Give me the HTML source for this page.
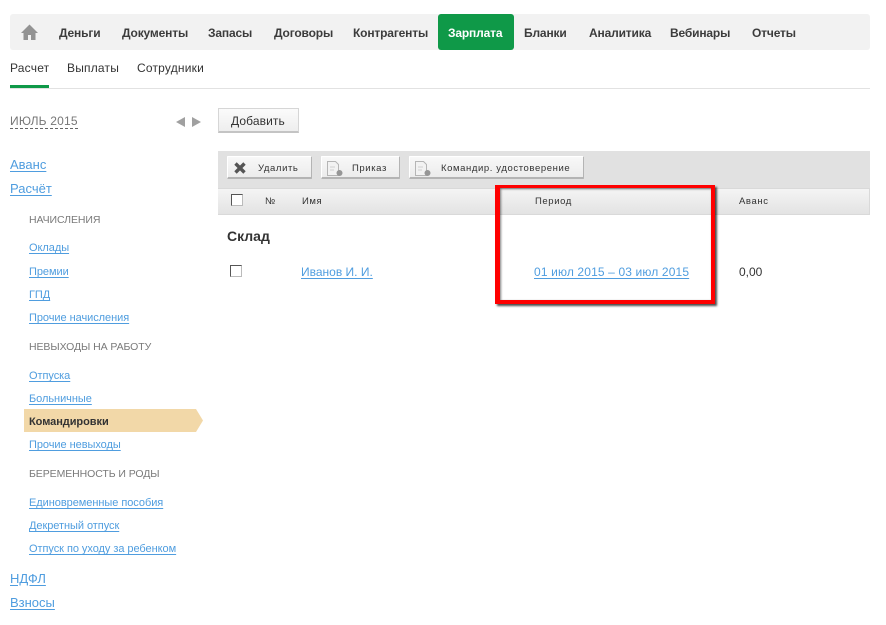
<!DOCTYPE html>
<html lang="ru"><head><meta charset="utf-8"><title>Зарплата</title>
<style>
html,body{margin:0;padding:0;background:#fff}
body{width:886px;height:625px;position:relative;overflow:hidden;font-family:"Liberation Sans",Arial,sans-serif;color:#333}
.a,.t{position:absolute;white-space:nowrap}
.t{line-height:16px;height:16px}
.nav{font-size:12px;font-weight:bold;color:#3c3c3c;top:25px;letter-spacing:-.16px}
.sub{font-size:12px;color:#333;top:60px;letter-spacing:.2px}
a{color:#4f9ddf;text-decoration:underline;text-underline-offset:2px}
.s{font-size:11px;letter-spacing:-.05px}
.b{font-size:13px}
.h{font-size:10.5px;color:#7a7a7a;letter-spacing:-.08px}
.btn{position:absolute;box-sizing:border-box;top:156px;height:23px;background:linear-gradient(#f8f8f8,#ececec);border:1px solid #fff;border-right:1px solid #b4b4b4;border-bottom:2px solid #b4b4b4;border-radius:1px}
.tb{font-size:9.5px;letter-spacing:.6px;color:#333}
.cb{position:absolute;box-sizing:border-box;background:#fff;border:1px solid #555;border-right-color:#bbb;border-bottom-color:#bbb}
</style></head><body>
<div class="a" style="left:10px;top:14px;width:860px;height:36px;background:#f2f2f2;border-radius:3px"></div>
<svg class="a" style="left:20px;top:23px" width="19" height="18" viewBox="0 0 19 18"><path d="M9.500 1.500 1 10h2.500v7H8v-5h3v5h4.500v-7H18z" fill="#939393"/></svg>
<span class="t nav" style="left:59px">Деньги</span>
<span class="t nav" style="left:122px">Документы</span>
<span class="t nav" style="left:208px">Запасы</span>
<span class="t nav" style="left:274px">Договоры</span>
<span class="t nav" style="left:353px">Контрагенты</span>
<div class="a" style="left:438px;top:14px;width:76px;height:36px;background:#0f9948;border-radius:3px"></div>
<span class="t nav" style="left:448px;color:#fff">Зарплата</span>
<span class="t nav" style="left:524px">Бланки</span>
<span class="t nav" style="left:589px">Аналитика</span>
<span class="t nav" style="left:670px">Вебинары</span>
<span class="t nav" style="left:752px">Отчеты</span>

<span class="t sub" style="left:10px">Расчет</span>
<span class="t sub" style="left:67px">Выплаты</span>
<span class="t sub" style="left:137px">Сотрудники</span>
<div class="a" style="left:10px;top:88px;width:860px;height:1px;background:#e2e2e2"></div>
<div class="a" style="left:10px;top:85px;width:39px;height:3px;background:#0f9948"></div>

<span class="t" style="left:10px;top:113px;font-size:12px;color:#777;border-bottom:1px dashed #666;height:15px;letter-spacing:.2px">ИЮЛЬ 2015</span>
<svg class="a" style="left:175px;top:116px" width="27" height="12"><path d="M10 1v10L1 6z" fill="#a0a0a0"/><path d="M17 1v10l9-5z" fill="#a0a0a0"/></svg>
<div class="a" style="left:218px;top:108px;width:81px;height:25px;box-sizing:border-box;background:linear-gradient(#fbfbfb,#eee);border:1px solid #d6d6d6;border-bottom:2px solid #c4c4c4"></div>
<span class="t" style="left:231px;top:113px;font-size:12px;color:#333;letter-spacing:.1px">Добавить</span>

<span class="t b" style="left:10px;top:157px"><a>Аванс</a></span>
<span class="t b" style="left:10px;top:181px"><a>Расчёт</a></span>
<span class="t h" style="left:29px;top:212px">НАЧИСЛЕНИЯ</span>
<span class="t s" style="left:29px;top:240px"><a>Оклады</a></span>
<span class="t s" style="left:29px;top:264px"><a>Премии</a></span>
<span class="t s" style="left:29px;top:287px"><a>ГПД</a></span>
<span class="t s" style="left:29px;top:310px"><a>Прочие начисления</a></span>
<span class="t h" style="left:29px;top:339px">НЕВЫХОДЫ НА РАБОТУ</span>
<span class="t s" style="left:29px;top:368px"><a>Отпуска</a></span>
<span class="t s" style="left:29px;top:391px"><a>Больничные</a></span>
<svg class="a" style="left:24px;top:409px" width="180" height="23"><path d="M0 0H172L179 11.500 172 23H0z" fill="#f2d8a8"/></svg>
<span class="t s" style="left:29px;top:414px;font-weight:bold;color:#333">Командировки</span>
<span class="t s" style="left:29px;top:437px"><a>Прочие невыходы</a></span>
<span class="t h" style="left:29px;top:466px">БЕРЕМЕННОСТЬ И РОДЫ</span>
<span class="t s" style="left:29px;top:495px"><a>Единовременные пособия</a></span>
<span class="t s" style="left:29px;top:518px"><a>Декретный отпуск</a></span>
<span class="t s" style="left:29px;top:541px"><a>Отпуск по уходу за ребенком</a></span>
<span class="t b" style="left:10px;top:571px"><a>НДФЛ</a></span>
<span class="t b" style="left:10px;top:595px"><a>Взносы</a></span>

<div class="a" style="left:218px;top:151px;width:652px;height:38px;background:#e1e1e1"></div>
<div class="btn" style="left:227px;width:85px"></div>
<svg class="a" style="left:233px;top:161px" width="14" height="14"><path d="M2.500 2.500l9 9M11.500 2.500l-9 9" stroke="#555" stroke-width="3.400"/></svg>
<span class="t tb" style="left:258px;top:161px">Удалить</span>
<div class="btn" style="left:321px;width:79px"></div>
<svg class="a" style="left:326px;top:160px" width="20" height="17"><path d="M1.500 1.500h8l3 3v11h-11z" fill="#f2f2f2" stroke="#b5b5b5"/><path d="M4 7h5M4 10h4" stroke="#d0d0d0"/><circle cx="13.500" cy="13" r="3" fill="#969696"/></svg>
<span class="t tb" style="left:352px;top:161px">Приказ</span>
<div class="btn" style="left:409px;width:175px"></div>
<svg class="a" style="left:414px;top:160px" width="20" height="17"><path d="M1.500 1.500h8l3 3v11h-11z" fill="#f2f2f2" stroke="#b5b5b5"/><path d="M4 7h5M4 10h4" stroke="#d0d0d0"/><circle cx="13.500" cy="13" r="3" fill="#969696"/></svg>
<span class="t tb" style="left:441px;top:161px">Командир. удостоверение</span>

<div class="a" style="left:218px;top:188px;width:652px;height:27px;box-sizing:border-box;background:linear-gradient(#f4f4f4,#e3e3e3);border:1px solid #d9d9d9;border-left:0"></div>
<div class="cb" style="left:231px;top:194px;width:12px;height:12px"></div>
<span class="t tb" style="left:265px;top:194px">№</span>
<span class="t tb" style="left:302px;top:194px">Имя</span>
<span class="t tb" style="left:535px;top:194px">Период</span>
<span class="t tb" style="left:739px;top:194px">Аванс</span>

<span class="t" style="left:227px;top:228px;font-size:14px;font-weight:bold;color:#333">Склад</span>
<div class="cb" style="left:230px;top:265px;width:12px;height:12px"></div>
<span class="t" style="left:301px;top:264px;font-size:12px"><a>Иванов И. И.</a></span>
<span class="t" style="left:534px;top:264px;font-size:12px;letter-spacing:.14px"><a>01 июл 2015 – 03 июл 2015</a></span>
<span class="t" style="left:739px;top:264px;font-size:12px;color:#333">0,00</span>

<div class="a" style="left:495px;top:185px;width:220px;height:119px;box-sizing:border-box;border:4px solid #f00;border-left-width:5px;border-top-width:3px;box-shadow:2px 2px 2px rgba(0,0,0,.7),inset 1px 1px 2px rgba(0,0,0,.5)"></div>
</body></html>
